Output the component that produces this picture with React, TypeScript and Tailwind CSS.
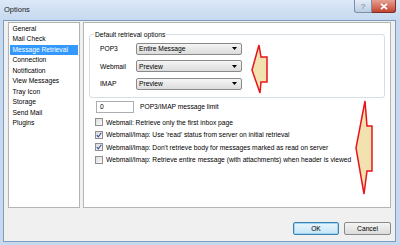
import React from 'react';

const items = [
  'General',
  'Mail Check',
  'Message Retrieval',
  'Connection',
  'Notification',
  'View Messages',
  'Tray Icon',
  'Storage',
  'Send Mail',
  'Plugins',
];

function Combo({ value }: { value: string }) {
  return (
    <div className="w-[106px] h-[12px] flex items-center justify-between pl-[2px] pr-[4px] rounded-[2px] border border-[#8a8a8a] bg-linear-to-b from-[#f5f5f5] to-[#dcdcdc]">
      <span>{value}</span>
      <svg width="5" height="3" viewBox="0 0 5 3">
        <path d="M0 0h5L2.5 3z" fill="#000" />
      </svg>
    </div>
  );
}

function Check({ checked, label }: { checked?: boolean; label: string }) {
  return (
    <div className="flex items-center h-[12.5px]">
      <div className="w-[8px] h-[8px] border border-[#8e8f8f] bg-linear-to-br from-[#dcdcdc] to-[#fbfbfb] flex items-center justify-center">
        {checked && (
          <svg width="6" height="6" viewBox="0 0 6 6">
            <path d="M0.8 3.2 L2.3 4.9 L5.3 0.8" stroke="#3a4f96" strokeWidth="1.1" fill="none" />
          </svg>
        )}
      </div>
      <span className="ml-[3px]">{label}</span>
    </div>
  );
}

export default function App() {
  return (
    <div className="relative w-[400px] h-[245px] overflow-hidden bg-[#c6d9ef] text-[6.7px] leading-[9px] text-black font-['Liberation_Sans',Arial,sans-serif]">
      {/* Title bar */}
      <div className="h-[20px] flex items-start bg-linear-to-b from-[#dbe8f7] to-[#c6d9ef]">
        <span className="ml-[4px] mt-[5px] text-[7.5px] text-[#1a1a1a]">Options</span>
        <div className="ml-auto mr-[4px] flex">
          <div className="w-[18px] h-[13px] flex items-center justify-center rounded-bl-[3px] border border-t-0 border-[#7b8fa8] bg-linear-to-b from-[#e4edf7] to-[#bccde2] text-[8px] text-[#6a7c93]">
            ?
          </div>
          <div className="w-[24px] h-[13px] flex items-center justify-center rounded-br-[3px] border border-t-0 border-l-0 border-[#7a2f27] bg-linear-to-b from-[#e5a093] to-[#c34330]">
            <svg width="8" height="7" viewBox="0 0 8 7">
              <path d="M1 0.8 L7 6.2 M7 0.8 L1 6.2" stroke="#fff" strokeWidth="1.7" />
            </svg>
          </div>
        </div>
      </div>

      {/* Client area */}
      <div className="ml-[3px] mr-[4px] h-[222px] border border-[#7f9cc0] bg-[#f0f0f0] flex flex-col">
        <div className="flex pl-[4px] pr-[4px] pt-[1px] gap-[3px] h-[187px]">
          {/* Left list */}
          <div className="w-[72px] h-full border border-[#b4b4b4] bg-white pt-[0.5px] px-[1px]">
            {items.map((it) => (
              <div
                key={it}
                className={
                  it === 'Message Retrieval'
                    ? 'h-[10.5px] leading-[10.5px] pl-[2.5px] bg-[#3399ff] text-white'
                    : 'h-[10.5px] leading-[10.5px] pl-[2.5px]'
                }
              >
                {it}
              </div>
            ))}
          </div>

          {/* Right panel */}
          <div className="flex-1 h-full border border-[#b4b4b4] bg-white pt-[6.5px] px-[5px]">
            <fieldset className="border border-[#d5dfe5] rounded-[3px] pl-[4px] pr-[4px] pt-[4px] pb-[7px]">
              <legend className="px-[1px] leading-[9px]">Default retrieval options</legend>
              <div className="flex flex-col gap-[5.5px] pl-[6px]">
                <div className="flex items-center">
                  <span className="w-[36px]">POP3</span>
                  <Combo value="Entire Message" />
                </div>
                <div className="flex items-center">
                  <span className="w-[36px]">Webmail</span>
                  <Combo value="Preview" />
                </div>
                <div className="flex items-center">
                  <span className="w-[36px]">IMAP</span>
                  <Combo value="Preview" />
                </div>
              </div>
            </fieldset>

            <div className="pl-[6px] mt-[3px]">
              <div className="flex items-center h-[12px]">
                <div className="ml-[1px] w-[38px] h-[12px] border border-[#abadb3] bg-white pl-[3px] flex items-center">0</div>
                <span className="ml-[6px]">POP3/IMAP message limit</span>
              </div>
              <div className="mt-[3.5px] flex flex-col">
                <Check label="Webmail: Retrieve only the first inbox page" />
                <Check checked label="Webmail/Imap: Use 'read' status from server on initial retrieval" />
                <Check checked label="Webmail/Imap: Don't retrieve body for messages marked as read on server" />
                <Check label="Webmail/Imap: Retrieve entire message (with attachments) when header is viewed" />
              </div>
            </div>
          </div>
        </div>

        {/* Buttons */}
        <div className="flex justify-end gap-[5px] pr-[4px] mt-[14px]">
          <div className="w-[46px] h-[13px] flex items-center justify-center rounded-[2px] border border-[#3c7fb1] bg-linear-to-b from-[#eaf6fd] to-[#c4e4f5] shadow-[inset_0_0_0_1px_#9fd6f3]">
            OK
          </div>
          <div className="w-[47px] h-[13px] flex items-center justify-center rounded-[2px] border border-[#8a8a8a] bg-linear-to-b from-[#f4f4f4] to-[#dcdcdc]">
            Cancel
          </div>
        </div>
      </div>

      {/* Annotation arrows */}
      <svg className="absolute inset-0 pointer-events-none" width="400" height="245" viewBox="0 0 400 245">
        <polygon
          points="259,45 261,57 267,57 267,82 261,82 260,93 252,70"
          fill="#f2e2b0"
          stroke="#e8141c"
          strokeWidth="1.5"
          strokeLinejoin="miter"
        />
        <polygon
          points="365,101 367,126 372,126 372,171 367,171 364,194 356,148"
          fill="#f2e2b0"
          stroke="#e8141c"
          strokeWidth="1.5"
          strokeLinejoin="miter"
        />
      </svg>
    </div>
  );
}
